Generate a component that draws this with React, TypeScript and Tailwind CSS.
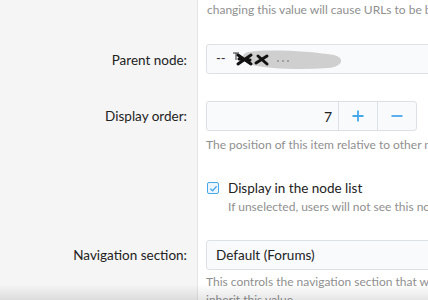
import React from "react";

const font = { fontFamily: 'Lato, "Noto Sans", sans-serif' };

function Label({ children }: { children?: React.ReactNode }) {
  return (
    <div className="w-[198px] shrink-0 border-r border-[#e4e4e4] bg-[#f5f5f5] pr-[10px] text-right text-[13.5px] text-[#222]">
      {children}
    </div>
  );
}

function Redacted() {
  return (
    <svg width="116" height="24" viewBox="0 0 116 24" className="ml-1 inline-block align-middle">
      <path d="M18 5 C40 2 78 4 104 8 C116 11 112 20 98 21 C70 23 40 22 22 18 C12 15 9 8 18 5 Z" fill="#cfcfcf" />
      <path d="M3 6 L9 6 M6 6 L6 13" stroke="#333" strokeWidth="1" />
      <path d="M8 8 L21 17 M8 17 L21 8 M9 12 L20 13" stroke="#111" strokeWidth="3" strokeLinecap="round" />
      <path d="M28 9 L37 17 M26 16 L37 9" stroke="#111" strokeWidth="3" strokeLinecap="round" />
      <circle cx="48" cy="14" r="0.8" fill="#666" />
      <circle cx="53" cy="14" r="0.8" fill="#666" />
      <circle cx="58" cy="14" r="0.8" fill="#666" />
    </svg>
  );
}

export default function App() {
  return (
    <div className="relative h-[300px] w-[428px] overflow-hidden bg-white" style={font}>
      {/* previous field help */}
      <div className="flex">
        <Label />
        <div className="min-w-0 flex-1 pb-[14px] pl-[9px]">
          <p className="whitespace-nowrap text-[12px] leading-5 text-[#8f8f8f]">
            changing this value will cause URLs to be broken
          </p>
        </div>
      </div>

      {/* parent node */}
      <div className="flex">
        <Label>
          <div className="pt-[11px] pb-[16px] leading-[30px]">Parent node:</div>
        </Label>
        <div className="min-w-0 flex-1 pt-[10px] pb-[17px] pl-2">
          <div className="flex h-[30px] w-[260px] items-center whitespace-nowrap rounded-[3px] border border-[#dde1e6] bg-[#f8fafc] pl-[9px] text-[13px] text-[#333]">
            <span>--</span>
            <Redacted />
          </div>
        </div>
      </div>

      {/* display order */}
      <div className="flex">
        <Label>
          <div className="pt-[10px] leading-[30px]">Display order:</div>
        </Label>
        <div className="min-w-0 flex-1 pt-[10px] pb-[13px] pl-2">
          <div className="flex h-[30px] w-[211px] rounded-[3px] border border-[#dde1e6] bg-[#f8fafc]">
            <div className="flex flex-1 items-center justify-end border-r border-[#dde1e6] pr-[6px] text-[14px] text-[#222]">
              7
            </div>
            <button className="flex w-[39px] items-center justify-center border-r border-[#dde1e6]">
              <svg width="12" height="12" viewBox="0 0 12 12">
                <path d="M6 0.5 V11.5 M0.5 6 H11.5" stroke="#47a7eb" strokeWidth="1.8" />
              </svg>
            </button>
            <button className="flex w-[38px] items-center justify-center">
              <svg width="12" height="12" viewBox="0 0 12 12">
                <path d="M0.5 6 H11.5" stroke="#47a7eb" strokeWidth="1.8" />
              </svg>
            </button>
          </div>
          <p className="mt-[4px] whitespace-nowrap text-[12px] leading-5 text-[#8f8f8f]">
            The position of this item relative to other nodes with the same parent.
          </p>
        </div>
      </div>

      {/* display in node list */}
      <div className="flex">
        <Label />
        <div className="min-w-0 flex-1 pt-[10px] pb-[14px] pl-[9px]">
          <label className="flex items-center gap-[9px] text-[13.5px] leading-5 text-[#222]">
            <span className="flex h-[12px] w-[12px] items-center justify-center rounded-[2px] border border-[#47a7eb] bg-[#eef6fd]">
              <svg width="9" height="9" viewBox="0 0 10 10">
                <path d="M1.5 5.2 L4 7.5 L8.5 2.5" fill="none" stroke="#47a7eb" strokeWidth="1.4" />
              </svg>
            </span>
            Display in the node list
          </label>
          <p className="whitespace-nowrap pl-[21px] text-[12px] leading-[18px] text-[#8f8f8f]">
            If unselected, users will not see this node in the list.
          </p>
        </div>
      </div>

      {/* navigation section */}
      <div className="flex flex-1">
        <Label>
          <div className="pt-[10px] pb-10 leading-[30px]">Navigation section:</div>
        </Label>
        <div className="min-w-0 flex-1 pt-[10px] pl-2">
          <div className="flex h-[30px] w-[260px] items-center whitespace-nowrap rounded-[3px] border border-[#dde1e6] bg-[#f8fafc] pl-[9px] text-[13.5px] text-[#222]">
            Default (Forums)
          </div>
          <p className="mt-[3px] whitespace-nowrap text-[12px] leading-[18px] text-[#8f8f8f]">
            This controls the navigation section that will be selected.
            <br />
            inherit this value.
          </p>
        </div>
      </div>

      <div className="pointer-events-none absolute bottom-0 left-0 h-[16px] w-full bg-gradient-to-t from-black/10 to-transparent" />
    </div>
  );
}
